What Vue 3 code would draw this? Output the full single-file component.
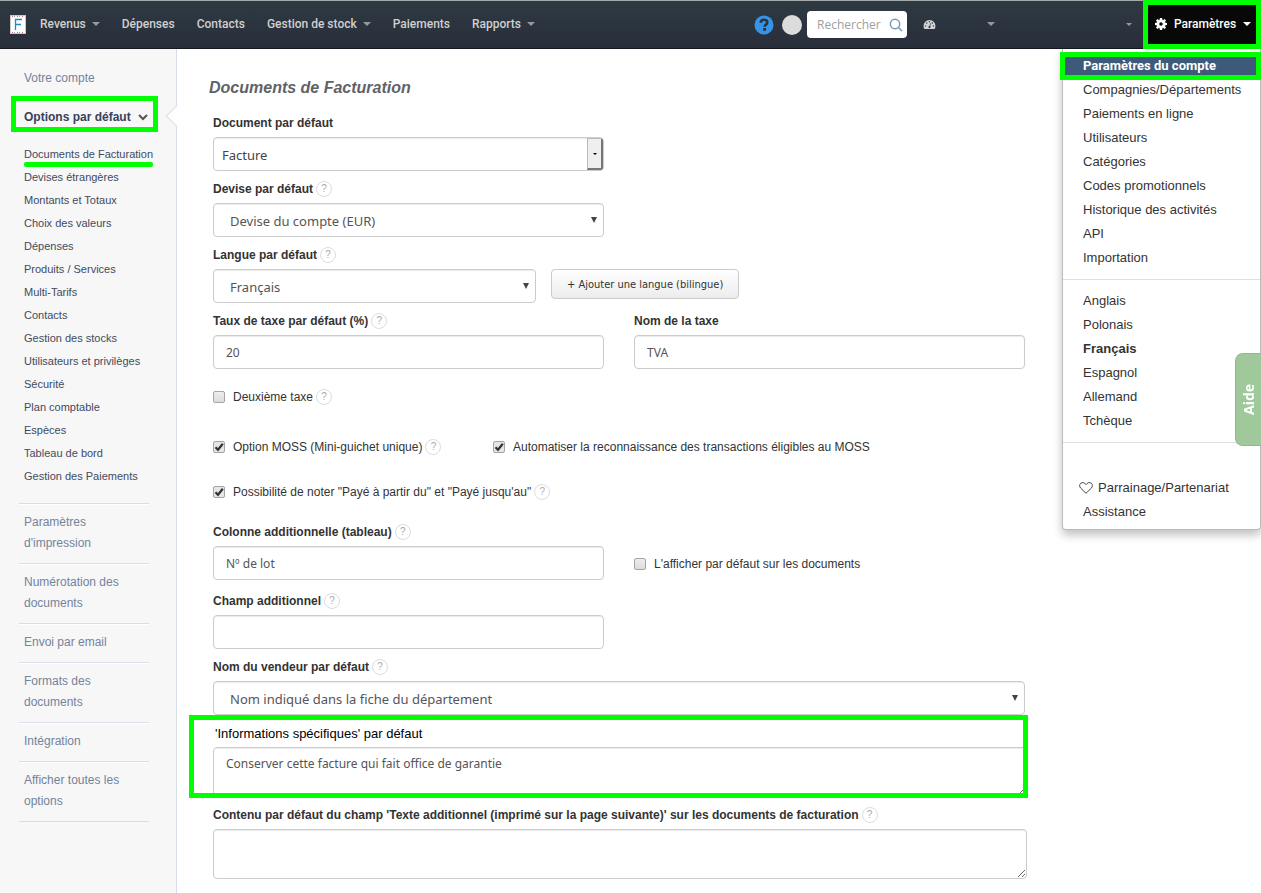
<template>
  <div class="page">
    <header class="topbar">
      <a class="logo" href="#" aria-label="F">
        <svg viewBox="0 0 16 19" width="16" height="19">
          <rect width="16" height="19" fill="#c9c9c9"/>
          <rect x="1" y="1" width="14" height="17" fill="#fff"/>
          <path d="M2 1.500H14M2 17.500H14" stroke="#d9646c" stroke-dasharray="1 4"/>
          <path d="M4 1.500H14M4 17.500H14" stroke="#7fa6d0" stroke-dasharray="1 4"/>
          <path d="M5.500 15V4.500H12M5.500 9.500H11" fill="none" stroke="#2a86c0" stroke-width="1.300"/>
        </svg>
      </a>
      <nav class="nav">
        <a v-for="item in navItems" :key="item.label" href="#">
          {{ item.label }}<span v-if="item.menu" class="caret"></span>
        </a>
      </nav>

      <div class="tools">
        <button class="round-btn" type="button" aria-label="Aide">
          <svg viewBox="0 0 20 20" width="20" height="20">
            <circle cx="10" cy="10" r="9.500" fill="#3594e8"/>
            <path d="M6.600 7.700C6.900 5.500 8.300 4.800 10 4.800c2 0 3.300 1 3.300 2.700 0 2.200-2.700 2-2.700 4.300" fill="none" stroke="#2b343f" stroke-width="2.600"/>
            <rect x="9.200" y="13" width="2.800" height="2.800" fill="#2b343f"/>
          </svg>
        </button>
        <span class="avatar"></span>
        <div class="search">
          <input v-model="query" type="text" placeholder="Rechercher" aria-label="Rechercher">
          <svg viewBox="0 0 14 14" width="14" height="14" fill="none" stroke="#7b97b8" stroke-width="1.500">
            <circle cx="6" cy="6" r="4.700"/>
            <path d="M9.500 9.500L13 13"/>
          </svg>
        </div>
        <button class="tool dashboard" type="button" aria-label="Tableau de bord">
          <svg viewBox="0 0 14 12" width="13" height="11">
            <path d="M7 1a6.500 6.500 0 0 0-6.500 6.500c0 1.300.4 2.500 1 3.500h11c.6-1 1-2.200 1-3.500A6.500 6.500 0 0 0 7 1z" fill="#d5d5d5"/>
            <g fill="#2c3540">
              <circle cx="2.700" cy="7.500" r=".8"/>
              <circle cx="4" cy="4.400" r=".8"/>
              <circle cx="7" cy="3.100" r=".8"/>
              <circle cx="10" cy="4.400" r=".8"/>
              <circle cx="11.300" cy="7.500" r=".8"/>
              <circle cx="7" cy="8.800" r="1.200"/>
            </g>
            <path d="M7 8.800L8.300 4.600" stroke="#2c3540" stroke-width=".8"/>
          </svg>
          <span class="caret"></span>
        </button>
        <button class="tool company" type="button" aria-label="Compagnie"><span class="caret small"></span></button>
        <button class="settings" type="button" @click="menuOpen = !menuOpen">
          <svg viewBox="0 0 12 12" width="12" height="12">
            <g fill="#fff">
              <circle cx="6" cy="6" r="4.300"/>
              <path d="M4.900 0h2.200l.4 2h-3zM4.900 12h2.200l.4-2h-3zM0 4.900v2.200l2 .4v-3zM12 4.900v2.200l-2 .4v-3z"/>
              <path d="M1 2.500L2.500 1l1.700 1.200-2 2zM11 2.500L9.500 1 7.800 2.200l2 2zM1 9.500L2.500 11l1.700-1.200-2-2zM11 9.500L9.500 11 7.800 9.800l2-2z"/>
            </g>
            <circle cx="6" cy="6" r="1.800" fill="#080808"/>
          </svg>
          Paramètres
          <span class="caret white"></span>
        </button>
      </div>

      <div v-if="menuOpen" class="menu">
        <a class="current" href="#">Paramètres du compte</a>
        <a v-for="item in accountItems" :key="item" href="#">{{ item }}</a>
        <hr>
        <a v-for="lang in languages" :key="lang" href="#" :class="{ chosen: lang === language }">{{ lang }}</a>
        <hr class="wide">
        <a class="partner" href="#">
          <svg viewBox="0 0 14 12" width="14" height="12" fill="none" stroke="#444">
            <path d="M7 11.300L1.600 6C.2 4.500.4 2.400 1.700 1.300 3.300 0 5.700.5 7 2.700 8.300.5 10.700 0 12.300 1.300c1.300 1.100 1.500 3.200.1 4.700z"/>
          </svg>
          Parrainage/Partenariat
        </a>
        <a href="#">Assistance</a>
      </div>
    </header>

    <div class="layout">
      <aside class="sidebar">
        <a class="section" href="#">Votre compte</a>
        <a class="section open" href="#">
          Options par défaut
          <svg viewBox="0 0 10 8" width="10" height="8" fill="none" stroke="#555" stroke-width="2">
            <path d="M1 2l4 4 4-4"/>
          </svg>
        </a>
        <ul class="sub">
          <li v-for="(item, i) in subItems" :key="item">
            <a href="#" :class="{ marked: i === 0 }">{{ item }}</a>
          </li>
        </ul>
        <ul class="groups">
          <li v-for="item in groups" :key="item"><a href="#">{{ item }}</a></li>
        </ul>
      </aside>

      <main class="content">
        <h1>Documents de Facturation</h1>
        <form @submit.prevent>
          <div class="row">
            <div class="field">
              <div class="label"><label for="doc">Document par défaut</label></div>
              <div class="combo">
                <input id="doc" v-model="form.document" type="text">
                <button type="button" aria-label="Ouvrir la liste"><span></span></button>
              </div>
            </div>
          </div>

          <div class="row">
            <div class="field">
              <div class="label"><label for="currency">Devise par défaut</label><span class="help">?</span></div>
              <div class="select">
                <select id="currency"><option>Devise du compte (EUR)</option></select>
              </div>
            </div>
          </div>

          <div class="label"><label for="lang">Langue par défaut</label><span class="help">?</span></div>
          <div class="lang-row">
            <div class="select">
              <select id="lang"><option>Français</option></select>
            </div>
            <button class="add-btn" type="button">+ Ajouter une langue (bilingue)</button>
          </div>

          <div class="row">
            <div class="field">
              <div class="label"><label for="rate">Taux de taxe par défaut (%)</label><span class="help">?</span></div>
              <input id="rate" v-model="form.rate" class="text" type="text">
            </div>
            <div class="field">
              <div class="label"><label for="taxname">Nom de la taxe</label></div>
              <input id="taxname" v-model="form.taxName" class="text" type="text">
            </div>
          </div>

          <div class="checks">
            <div class="check">
              <input id="second" v-model="form.secondTax" type="checkbox">
              <label for="second">Deuxième taxe</label><span class="help">?</span>
            </div>
          </div>
          <div class="checks moss">
            <div class="check">
              <input id="moss" v-model="form.moss" type="checkbox">
              <label for="moss">Option MOSS (Mini-guichet unique)</label><span class="help">?</span>
            </div>
            <div class="check">
              <input id="auto" v-model="form.autoMoss" type="checkbox">
              <label for="auto">Automatiser la reconnaissance des transactions éligibles au MOSS</label>
            </div>
          </div>
          <div class="checks paid">
            <div class="check">
              <input id="paid" v-model="form.paidRange" type="checkbox">
              <label for="paid">Possibilité de noter "Payé à partir du" et "Payé jusqu'au"</label><span class="help">?</span>
            </div>
          </div>

          <div class="row spaced">
            <div class="field">
              <div class="label"><label for="column">Colonne additionnelle (tableau)</label><span class="help">?</span></div>
              <input id="column" v-model="form.column" class="text" type="text">
            </div>
            <div class="check beside">
              <input id="showcol" v-model="form.showColumn" type="checkbox">
              <label for="showcol">L'afficher par défaut sur les documents</label>
            </div>
          </div>

          <div class="row extra">
            <div class="field">
              <div class="label"><label for="extra">Champ additionnel</label><span class="help">?</span></div>
              <input id="extra" v-model="form.extra" class="text" type="text">
            </div>
          </div>

          <div class="field">
            <div class="label"><label for="seller">Nom du vendeur par défaut</label><span class="help">?</span></div>
            <div class="select">
              <select id="seller"><option>Nom indiqué dans la fiche du département</option></select>
            </div>
          </div>

          <div class="field highlighted">
            <div class="label"><label for="info">'Informations spécifiques' par défaut</label></div>
            <textarea id="info" v-model="form.info"></textarea>
          </div>

          <div class="field">
            <div class="label">
              <label for="more">Contenu par défaut du champ 'Texte additionnel (imprimé sur la page suivante)' sur les documents de facturation</label><span class="help">?</span>
            </div>
            <textarea id="more" v-model="form.more"></textarea>
          </div>
        </form>
      </main>
    </div>

    <button class="help-tab" type="button">Aide</button>
  </div>
</template>

<script setup>
import { ref, reactive } from 'vue'

const menuOpen = ref(true)
const query = ref('')
const language = ref('Français')

const navItems = [
  { label: 'Revenus', menu: true },
  { label: 'Dépenses' },
  { label: 'Contacts' },
  { label: 'Gestion de stock', menu: true },
  { label: 'Paiements' },
  { label: 'Rapports', menu: true }
]

const accountItems = [
  'Compagnies/Départements',
  'Paiements en ligne',
  'Utilisateurs',
  'Catégories',
  'Codes promotionnels',
  'Historique des activités',
  'API',
  'Importation'
]

const languages = ['Anglais', 'Polonais', 'Français', 'Espagnol', 'Allemand', 'Tchèque']

const subItems = [
  'Documents de Facturation',
  'Devises étrangères',
  'Montants et Totaux',
  'Choix des valeurs',
  'Dépenses',
  'Produits / Services',
  'Multi-Tarifs',
  'Contacts',
  'Gestion des stocks',
  'Utilisateurs et privilèges',
  'Sécurité',
  'Plan comptable',
  'Espèces',
  'Tableau de bord',
  'Gestion des Paiements'
]

const groups = [
  "Paramètres d'impression",
  'Numérotation des documents',
  'Envoi par email',
  'Formats des documents',
  'Intégration',
  'Afficher toutes les options'
]

const form = reactive({
  document: 'Facture',
  rate: '20',
  taxName: 'TVA',
  secondTax: false,
  moss: true,
  autoMoss: true,
  paidRange: true,
  column: 'Nº de lot',
  showColumn: false,
  extra: '',
  info: 'Conserver cette facture qui fait office de garantie',
  more: ''
})
</script>

<style>
body {
  margin: 0;
  background: #fff;
}
</style>

<style scoped>
.page {
  font-family: "Liberation Sans", Arial, sans-serif;
  font-size: 12px;
  color: #333;
}

.page *,
.page *::before,
.page *::after {
  box-sizing: border-box;
}

a {
  color: inherit;
  text-decoration: none;
}

button {
  cursor: pointer;
}

.topbar {
  position: relative;
  z-index: 5;
  display: flex;
  align-items: center;
  height: 49px;
  padding-left: 10px;
  border-top: 1px solid #a5a9ab;
  border-bottom: 1px solid #15181e;
  background: linear-gradient(#2e3a42, #292e3b);
}

.logo {
  display: flex;
  margin-right: 14px;
}

.nav {
  display: flex;
  gap: 22px;
  padding-bottom: 2px;
  font-family: Roboto, sans-serif;
  font-weight: 500;
  line-height: 18px;
  color: #d0d0d0;
  white-space: nowrap;
}

.nav a {
  display: flex;
  align-items: center;
}

.caret {
  border: 4px solid transparent;
  border-top-color: #999;
  border-bottom-width: 0;
}

.nav .caret {
  margin-left: 6px;
}

.caret.small {
  border-width: 3px 3px 0;
}

.caret.white {
  border-top-color: #fff;
}

.tools {
  display: flex;
  align-items: center;
  align-self: stretch;
  margin-left: auto;
}

.tools button {
  display: flex;
  align-items: center;
  padding: 0;
  border: 0;
  background: none;
}

.avatar {
  width: 20px;
  height: 20px;
  margin: 0 5px 0 8px;
  border-radius: 50%;
  background: #dcdcdc;
}

.search {
  display: flex;
  align-items: center;
  width: 100px;
  height: 27px;
  padding: 0 4px 0 10px;
  border-radius: 4px;
  background: #fff;
}

.search input {
  flex: 1;
  min-width: 0;
  padding: 0;
  border: 0;
  outline: 0;
  font: 12px "Open Sans", sans-serif;
}

.search input::placeholder {
  color: #a0a0a0;
}

.tools .dashboard {
  justify-content: space-between;
  width: 72px;
  margin-left: 16px;
  padding-bottom: 1px;
}

.tools .company {
  justify-content: flex-end;
  width: 137px;
  height: 24px;
  margin-right: 11px;
  padding-bottom: 1px;
}

.tools .settings {
  align-self: stretch;
  justify-content: space-between;
  width: 118px;
  margin: -1px 0;
  padding: 0 5px 2px 7px;
  border: 5px solid #0f0;
  background: #080808;
  font: 500 12px Roboto, sans-serif;
  color: #fff;
}

.menu {
  position: absolute;
  top: 48px;
  right: 0;
  width: 199px;
  padding: 5px 0;
  border: 1px solid #bbb;
  border-top: 0;
  border-radius: 0 0 4px 4px;
  background: #fff;
  box-shadow: 0 5px 10px rgba(0, 0, 0, 0.25);
  font-size: 13px;
  line-height: 24px;
}

.menu a {
  display: block;
  padding-left: 20px;
}

.menu .current {
  position: relative;
  font-family: Roboto, sans-serif;
  font-weight: 700;
  color: #fff;
  background: #3d5a7a;
}

.menu .current::after {
  content: '';
  position: absolute;
  inset: -2px -1px -2px -3px;
  border: 5px solid #0f0;
}

.menu .chosen {
  font-weight: 700;
}

.menu hr {
  height: 1px;
  margin: 9px 0;
  border: 0;
  background: #e0e0e0;
}

.menu .wide {
  margin-bottom: 33px;
}

.menu .partner {
  display: flex;
  align-items: center;
  gap: 5px;
  padding-left: 16px;
}

.layout {
  display: flex;
  min-height: calc(100vh - 49px);
}

.sidebar {
  position: relative;
  flex: none;
  width: 177px;
  padding: 17px 0 20px;
  border-right: 1px solid #d8dee7;
  background: #f7f7f7;
}

/* notch pointing at the open section */
.sidebar::after {
  content: '';
  position: absolute;
  top: 59px;
  right: -9px;
  width: 16px;
  height: 16px;
  border: 1px solid #d8dee7;
  border-width: 0 0 1px 1px;
  background: #fff;
  transform: rotate(45deg);
}

.section {
  display: block;
  padding-left: 24px;
  line-height: 24px;
  color: #74839b;
}

.section.open {
  display: flex;
  align-items: center;
  justify-content: space-between;
  width: 147px;
  height: 36px;
  margin: 6px 0 0 11px;
  padding: 6px 5px 0 8px;
  border: 5px solid #0f0;
  font-weight: 700;
  color: #34425c;
}

.sub,
.groups {
  margin: 0;
  padding: 0;
  list-style: none;
}

.sub {
  margin-top: 11px;
  padding-left: 24px;
  font-size: 11px;
  line-height: 23px;
  color: #414b5e;
  white-space: nowrap;
}

.sub .marked {
  position: relative;
}

.sub .marked::after {
  content: '';
  position: absolute;
  right: 0;
  bottom: -7px;
  left: 0;
  height: 5px;
  border-radius: 2px;
  background: #0f0;
}

.groups {
  width: 130px;
  margin: 15px 0 0 19px;
  border-bottom: 1px solid #d8dee7;
  line-height: 21px;
  color: #74839b;
}

.groups li {
  padding: 8px 20px 9px 5px;
  border-top: 1px solid #d8dee7;
  box-shadow: inset 0 1px #fff;
}

.content {
  flex: 1;
  min-width: 0;
  padding: 27px 236px 14px 36px;
}

h1 {
  margin: 0 0 5px -4px;
  font-size: 16px;
  font-style: italic;
  line-height: 24px;
  color: #5f6368;
}

.row {
  display: grid;
  grid-template-columns: 1fr 1fr;
  gap: 30px;
}

.label {
  display: flex;
  align-items: center;
  height: 32px;
  padding-top: 4px;
  font-weight: 700;
  white-space: nowrap;
}

.help {
  flex: none;
  width: 16px;
  height: 16px;
  margin-left: 3px;
  border: 1px solid #ddd;
  border-radius: 50%;
  font-size: 10px;
  font-weight: 400;
  line-height: 14px;
  text-align: center;
  color: #aaa;
}

.text,
.select select,
.combo,
textarea {
  display: block;
  width: 100%;
  height: 34px;
  border: 1px solid #ccc;
  border-radius: 4px;
  outline: 0;
  background: #fff;
  box-shadow: inset 0 1px 1px rgba(0, 0, 0, 0.08);
  font-family: "Noto Sans", sans-serif;
  font-size: 12px;
  color: #555;
}

.text {
  padding: 0 12px;
}

.select {
  position: relative;
}

.select select {
  appearance: none;
  padding: 2px 24px 0 16px;
  font-size: 13px;
}

.select::after {
  content: '';
  position: absolute;
  top: 14px;
  right: 7px;
  border: 3px solid transparent;
  border-top: 6px solid #444;
  border-bottom: 0;
}

.combo {
  display: flex;
  overflow: hidden;
}

.combo input {
  flex: 1;
  min-width: 0;
  padding: 2px 8px 0;
  border: 0;
  outline: 0;
  background: none;
  font: 13px "Noto Sans", sans-serif;
  color: #444;
}

.combo button {
  display: flex;
  align-items: center;
  justify-content: center;
  width: 16px;
  padding: 0;
  border: 1px solid #bbb;
  border-right: 2px solid #777;
  border-bottom: 2px solid #777;
  background: #efefef;
}

.combo button span {
  border: 2px solid transparent;
  border-top-color: #000;
  border-bottom: 0;
}

.lang-row {
  display: flex;
  gap: 15px;
}

.lang-row .select {
  width: 323px;
}

.add-btn {
  height: 30px;
  padding: 0 15px;
  border: 1px solid #ccc;
  border-radius: 4px;
  background: linear-gradient(#fff, #ececec);
  font: 11px "DejaVu Sans Condensed", "DejaVu Sans", sans-serif;
  color: #333;
}

.checks {
  display: grid;
  grid-template-columns: 280px 1fr;
  margin-top: 16px;
}

.checks.moss {
  margin-top: 26px;
}

.checks.paid {
  grid-template-columns: 1fr;
  margin-top: 21px;
}

.check {
  display: flex;
  align-items: center;
  height: 24px;
  white-space: nowrap;
}

.check input {
  appearance: none;
  flex: none;
  width: 12px;
  height: 12px;
  margin: 0 8px 0 0;
  border: 1px solid #a5a5a5;
  border-radius: 2px;
  background: linear-gradient(#eee, #dcdcdc);
}

.check input:checked {
  background: #e6e6e6 url("data:image/svg+xml,%3Csvg xmlns='http://www.w3.org/2000/svg' viewBox='0 0 10 10'%3E%3Cpath d='M1.500 5.200L4 7.800 8.800 1.800' fill='none' stroke='%23333' stroke-width='2.200'/%3E%3C/svg%3E") center / 10px 10px no-repeat;
}

.row.spaced {
  align-items: end;
  margin-top: 10px;
}

.check.beside {
  margin-bottom: 4px;
}

.row.extra {
  margin-top: 3px;
}

.highlighted {
  position: relative;
}

.highlighted .label {
  padding-left: 2px;
  font-size: 13px;
  font-weight: 400;
  color: #000;
}

.highlighted::after {
  content: '';
  position: absolute;
  inset: 0 -3px -1px -24px;
  border: 5px solid #0f0;
  pointer-events: none;
}

textarea {
  width: calc(100% + 2px);
  height: 50px;
  padding: 8px 12px;
  line-height: 16px;
  resize: vertical;
}

.help-tab {
  position: fixed;
  top: 353px;
  right: 0;
  z-index: 6;
  width: 26px;
  height: 93px;
  padding: 0;
  border: 1px solid #8fba8a;
  border-left: 0;
  border-radius: 0 8px 8px 0;
  background: #9fc99a;
  font: 700 14px "Open Sans", sans-serif;
  color: #fff;
  writing-mode: vertical-rl;
  transform: rotate(180deg);
}
</style>
